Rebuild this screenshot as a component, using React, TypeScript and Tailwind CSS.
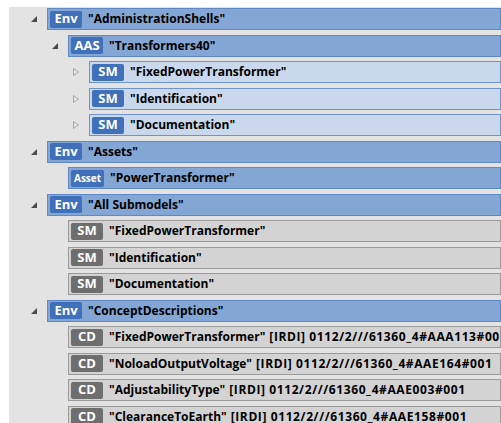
import type { ReactNode } from 'react';

type Kind = 'env' | 'sub' | 'grey';

interface Node {
  level: number;
  toggle?: 'open' | 'closed';
  badge: string;
  label: string;
  irdi?: string;
  kind: Kind;
}

const nodes: Node[] = [
  { level: 0, toggle: 'open', badge: 'Env', label: '"AdministrationShells"', kind: 'env' },
  { level: 1, toggle: 'open', badge: 'AAS', label: '"Transformers40"', kind: 'env' },
  { level: 2, toggle: 'closed', badge: 'SM', label: '"FixedPowerTransformer"', kind: 'sub' },
  { level: 2, toggle: 'closed', badge: 'SM', label: '"Identification"', kind: 'sub' },
  { level: 2, toggle: 'closed', badge: 'SM', label: '"Documentation"', kind: 'sub' },
  { level: 0, toggle: 'open', badge: 'Env', label: '"Assets"', kind: 'env' },
  { level: 1, badge: 'Asset', label: '"PowerTransformer"', kind: 'env' },
  { level: 0, toggle: 'open', badge: 'Env', label: '"All Submodels"', kind: 'env' },
  { level: 1, badge: 'SM', label: '"FixedPowerTransformer"', kind: 'grey' },
  { level: 1, badge: 'SM', label: '"Identification"', kind: 'grey' },
  { level: 1, badge: 'SM', label: '"Documentation"', kind: 'grey' },
  { level: 0, toggle: 'open', badge: 'Env', label: '"ConceptDescriptions"', kind: 'env' },
  { level: 1, badge: 'CD', label: '"FixedPowerTransformer"', irdi: '[IRDI] 0112/2///61360_4#AAA113#001', kind: 'grey' },
  { level: 1, badge: 'CD', label: '"NoloadOutputVoltage"', irdi: '[IRDI] 0112/2///61360_4#AAE164#001', kind: 'grey' },
  { level: 1, badge: 'CD', label: '"AdjustabilityType"', irdi: '[IRDI] 0112/2///61360_4#AAE003#001', kind: 'grey' },
  { level: 1, badge: 'CD', label: '"ClearanceToEarth"', irdi: '[IRDI] 0112/2///61360_4#AAE158#001', kind: 'grey' },
];

const rowStyles: Record<Kind, string> = {
  env: 'bg-[#84a6d4] border-[#6088c4]',
  sub: 'bg-[#c9d8ec] border-[#6f94ca]',
  grey: 'bg-[#d3d3d3] border-[#9b9b9b]',
};

const badgeStyles: Record<Kind, string> = {
  env: 'bg-[#3f70b9]',
  sub: 'bg-[#3f70b9]',
  grey: 'bg-[#6e6e6e]',
};

const indents = ['pl-[19px]', 'pl-[40px]', 'pl-[61px]'];

function Toggle({ state }: { state?: 'open' | 'closed' }) {
  let glyph: ReactNode = null;
  if (state === 'open') {
    glyph = (
      <svg width="6" height="6" viewBox="0 0 6 6">
        <polygon points="6,0 6,6 0,6" fill="#4b4b4b" />
      </svg>
    );
  } else if (state === 'closed') {
    glyph = (
      <svg width="6" height="8" viewBox="0 0 6 8">
        <polygon points="0.5,0.5 5.5,4 0.5,7.5" fill="none" stroke="#a8a8a8" strokeWidth="1" />
      </svg>
    );
  }
  return <div className="w-[19px] shrink-0 flex items-center pl-[3px]">{glyph}</div>;
}

function TreeRow({ node }: { node: Node }) {
  return (
    <div className={`flex items-stretch h-[22px] ${indents[node.level]}`}>
      <Toggle state={node.toggle} />
      <div
        className={`flex-1 flex items-center gap-[6px] border pl-[2px] whitespace-nowrap overflow-hidden ${rowStyles[node.kind]}`}
      >
        <span
          className={`h-[17px] min-w-[32px] px-[3px] rounded-[2px] flex items-center justify-center text-white font-bold ${
            node.badge === 'Asset' ? 'text-[10px]' : 'text-[13px]'
          } ${badgeStyles[node.kind]}`}
        >
          {node.badge}
        </span>
        <span className="text-[12px] font-bold text-black">
          {node.label}
          {node.irdi && <span className="ml-[4px] tracking-[0.6px]">{node.irdi}</span>}
        </span>
      </div>
    </div>
  );
}

export default function App() {
  return (
    <div className="w-[501px] h-[423px] overflow-hidden bg-white font-['Open_Sans',sans-serif]">
      <div className="ml-[9px] mt-[7px] h-full bg-[#e3e3e3] pt-[1px] flex flex-col gap-[4.5px]">
        {nodes.map((node, i) => (
          <TreeRow key={i} node={node} />
        ))}
      </div>
    </div>
  );
}
